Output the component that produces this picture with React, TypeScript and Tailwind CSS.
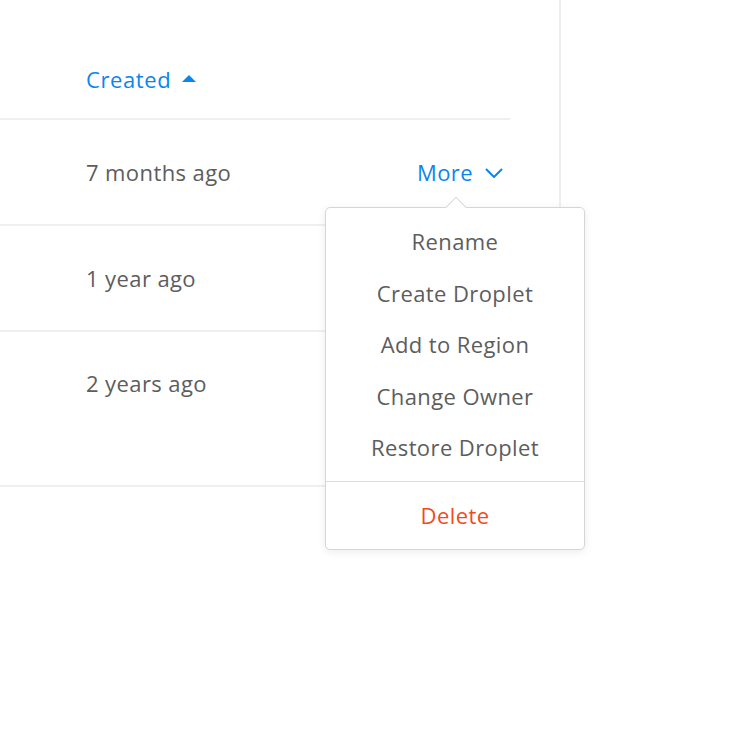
import { ReactNode } from "react";

const font = { fontFamily: "'Open Sans', 'Lato', sans-serif" };

function Row({ label, tall, children }: { label: string; tall?: boolean; children?: ReactNode }) {
  return (
    <div
      className={`flex border-b-2 border-[#efefef] ${tall ? "h-[155px] items-start pt-[35px]" : "h-[106px] items-center"}`}
    >
      <div className="w-[86px] shrink-0" />
      <div className="flex-1 text-[22px] leading-[32px] tracking-[0.4px] text-[#5d5d5d]">{label}</div>
      {children}
    </div>
  );
}

const items = ["Rename", "Create Droplet", "Add to Region", "Change Owner", "Restore Droplet"];

export default function App() {
  return (
    <div className="relative h-[752px] w-[750px] bg-white" style={font}>
      <div className="h-[490px] w-[561px] border-r-2 border-[#efefef]">
        <div className="w-[510px]">
          <div className="flex h-[120px] items-center border-b-2 border-[#efefef] pl-[86px] pt-[40px]">
            <span className="text-[22px] leading-[32px] tracking-[0.6px] text-[#0b85ef]">Created</span>
            <svg width="14" height="7" viewBox="0 0 14 7" className="ml-[11px] mb-[2px]">
              <path d="M0 7 L7 0 L14 7 Z" fill="#0b85ef" />
            </svg>
          </div>
          <Row label="7 months ago">
            <div className="flex items-center pr-[7px] text-[22px] leading-[32px] tracking-[0.4px] text-[#0b85ef]">
              <span>More</span>
              <svg width="18" height="10" viewBox="0 0 18 10" className="ml-[12px] mt-[1px]">
                <path d="M1 1 L9 9 L17 1" fill="none" stroke="#0b85ef" strokeWidth="2" />
              </svg>
            </div>
          </Row>
          <Row label="1 year ago" />
          <Row label="2 years ago" tall />
        </div>
      </div>

      <div className="absolute left-[325px] top-[207px] w-[260px] rounded-[5px] border border-[#d6d6d6] bg-white shadow-[0_2px_8px_rgba(0,0,0,0.08)]">
        <div className="absolute left-[118px] top-[-12px] h-[12px] w-[24px] overflow-hidden">
          <div className="absolute left-[4px] top-[4px] h-[16px] w-[16px] rotate-45 border border-[#d6d6d6] bg-white" />
        </div>
        <div className="pt-[8px] pb-[7px]">
          {items.map((t) => (
            <div
              key={t}
              className="flex h-[51.5px] items-center justify-center text-[22px] tracking-[0.4px] text-[#5d5d5d]"
            >
              {t}
            </div>
          ))}
        </div>
        <div className="flex h-[68px] items-center justify-center border-t border-[#dcdcdc] text-[22px] tracking-[0.4px] text-[#f24a1d]">
          Delete
        </div>
      </div>
    </div>
  );
}
